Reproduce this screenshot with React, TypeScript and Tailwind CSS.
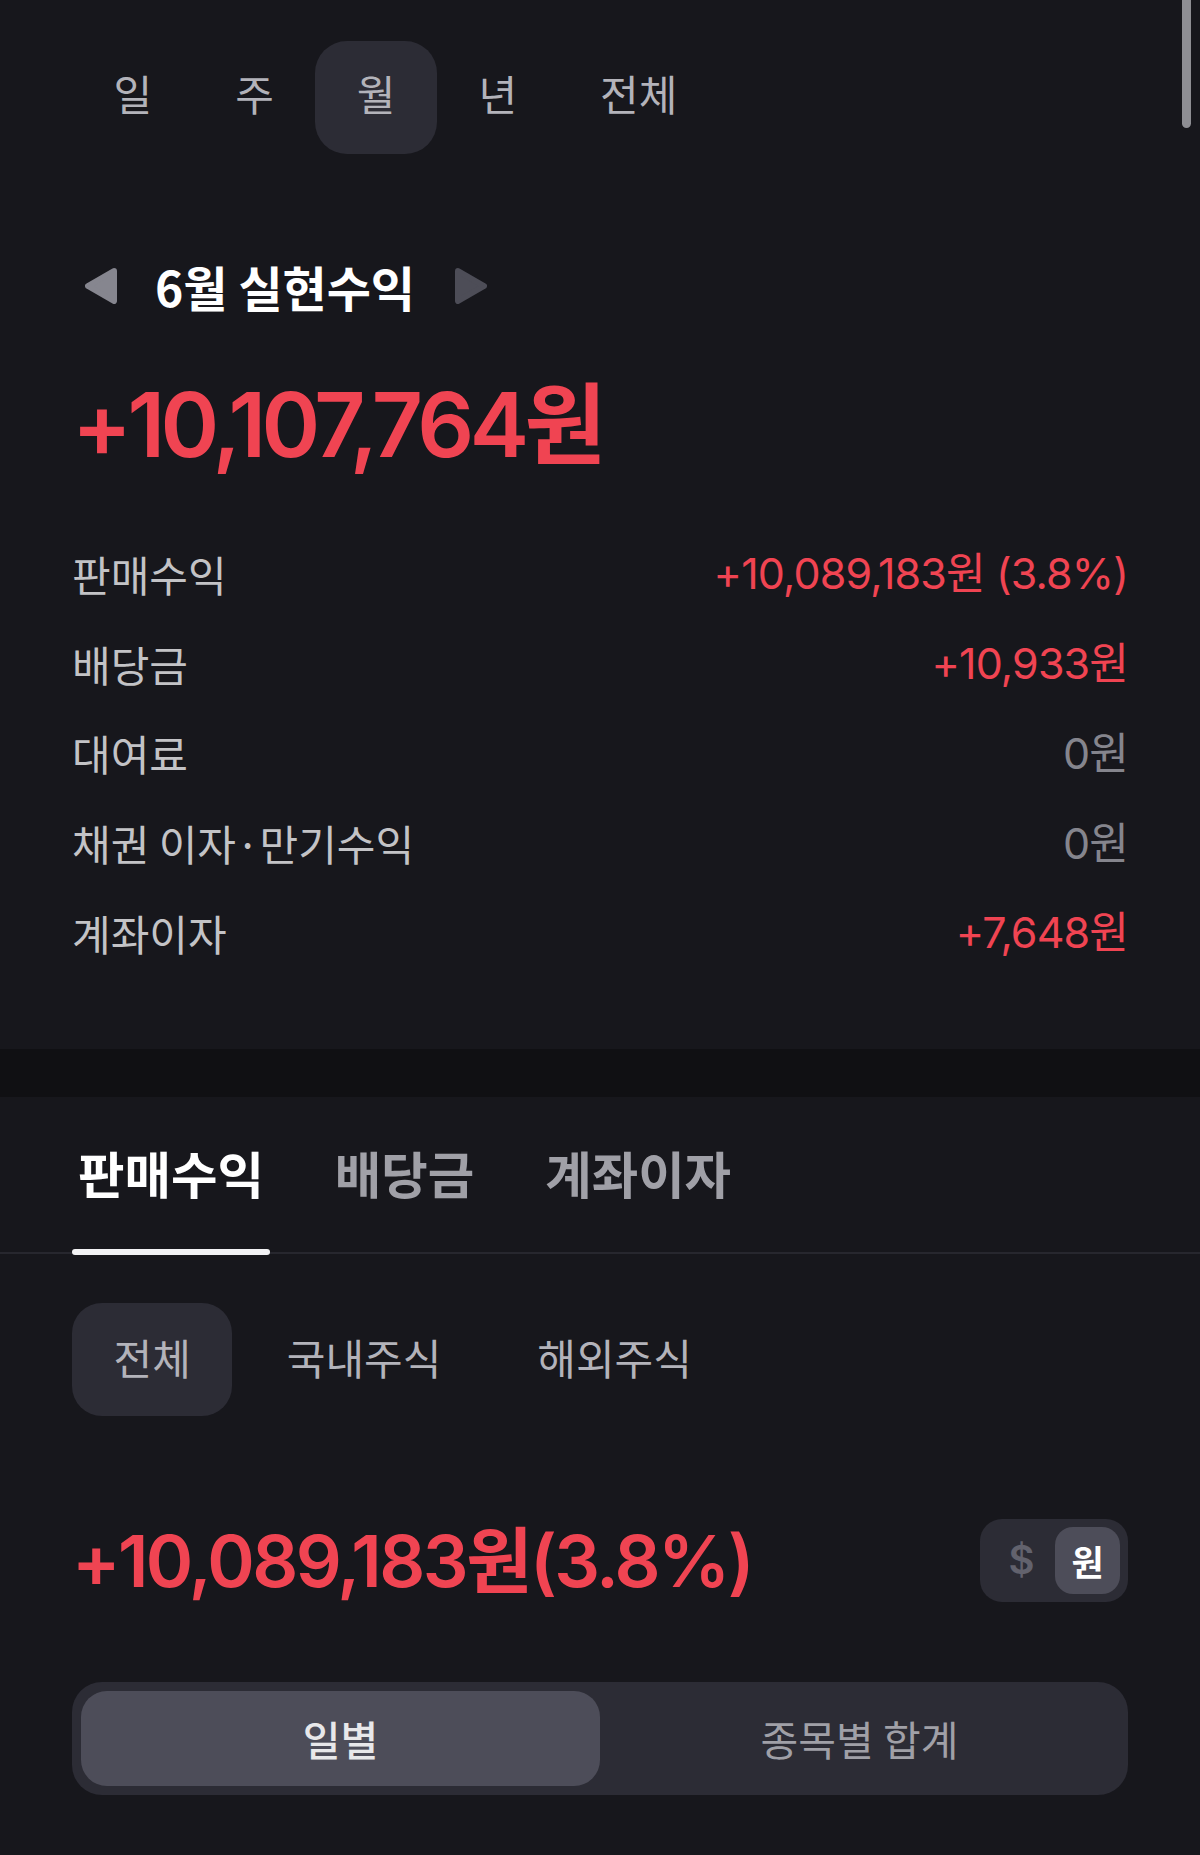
import React from "react";

const KR = { fontFamily: '"Noto Sans CJK KR", "Noto Sans", sans-serif' };
const NUM = { fontFamily: 'Inter, "Noto Sans CJK KR", sans-serif' };

function TriLeft({ color }: { color: string }) {
  return (
    <svg width="32" height="36" viewBox="0 0 32 36">
      <polygon points="29,3 3,18 29,33" fill={color} stroke={color} strokeWidth="6" strokeLinejoin="round" />
    </svg>
  );
}
function TriRight({ color }: { color: string }) {
  return (
    <svg width="32" height="36" viewBox="0 0 32 36">
      <polygon points="3,3 29,18 3,33" fill={color} stroke={color} strokeWidth="6" strokeLinejoin="round" />
    </svg>
  );
}

const rows: { label: string; value: string; red: boolean }[] = [
  { label: "판매수익", value: "+10,089,183원 (3.8%)", red: true },
  { label: "배당금", value: "+10,933원", red: true },
  { label: "대여료", value: "0원", red: false },
  { label: "채권 이자·만기수익", value: "0원", red: false },
  { label: "계좌이자", value: "+7,648원", red: true },
];

export default function App() {
  const periods = ["일", "주", "월", "년", "전체"];
  return (
    <div className="relative w-[1200px] min-h-[1855px] bg-[#17171c] overflow-hidden" style={KR}>
      {/* scrollbar */}
      <div className="absolute right-[9px] top-0 w-[9px] h-[128px] rounded-b-full bg-[#8e8e93]" />

      {/* Section 1 */}
      <div className="px-[72px] pt-[41px] pb-[71px]">
        <div className="flex">
          {periods.map((p) => (
            <div
              key={p}
              className={
                "h-[113px] px-[41.5px] pb-[10px] flex items-center rounded-[32px] text-[42px] leading-none text-[#b3b3ba] " +
                (p === "월" ? "bg-[#2c2c35]" : "")
              }
            >
              {p}
            </div>
          ))}
        </div>

        <div className="mt-[102px] h-[60px] flex items-center">
          <div className="ml-[13px]">
            <TriLeft color="#86868f" />
          </div>
          <div className="ml-[38px] text-[48px] font-bold leading-none text-white">6월 실현수익</div>
          <div className="ml-[40px]">
            <TriRight color="#4d4d57" />
          </div>
        </div>

        <div
          className="mt-[59px] h-[100px] leading-[100px] text-[89px] font-semibold text-[#f04452] tracking-[-0.05em]"
          style={NUM}
        >
          +10,107,764원
        </div>

        <div className="mt-[54px]">
          {rows.map((r) => (
            <div key={r.label} className="h-[89.75px] flex items-center justify-between">
              <span className="text-[42px] leading-none text-[#c3c3c6]">{r.label}</span>
              <span
                className={"text-[43px] leading-none tracking-[-0.02em] " + (r.red ? "text-[#f04452]" : "text-[#85858d]")}
                style={NUM}
              >
                {r.value}
              </span>
            </div>
          ))}
        </div>
      </div>

      {/* band */}
      <div className="h-[48px] bg-[#101013]" />

      {/* Section 2 */}
      <div className="flex gap-[59px] px-[72px] border-b-2 border-[#27272e]">
        {["판매수익", "배당금", "계좌이자"].map((t, i) => (
          <div
            key={t}
            className={
              "relative px-[6px] pt-[45px] pb-[50px] text-[50.5px] leading-[60px] font-bold " +
              (i === 0 ? "text-white" : "text-[#a0a0a7]")
            }
          >
            {t}
            {i === 0 && <div className="absolute left-0 right-0 bottom-[-3px] h-[6px] rounded-full bg-[#f2f2f4]" />}
          </div>
        ))}
      </div>

      <div className="px-[72px] pb-[59px]">
        <div className="mt-[49px] flex gap-[13px]">
          {["전체", "국내주식", "해외주식"].map((t, i) => (
            <div
              key={t}
              className={
                "h-[113px] px-[41.5px] pb-[5px] flex items-center rounded-[30px] text-[42px] leading-none text-[#b3b3ba] " +
                (i === 0 ? "bg-[#2c2c35]" : "")
              }
            >
              {t}
            </div>
          ))}
        </div>

        <div className="mt-[103px] h-[83px] flex items-center justify-between">
          <div
            className="text-[72px] leading-[83px] font-semibold text-[#f04452] tracking-[-0.035em]"
            style={NUM}
          >
            +10,089,183원(3.8%)
          </div>
          <div className="h-[83px] w-[148px] rounded-[22px] bg-[#2c2c35] p-[8px] flex items-center">
            <span className="w-[67px] text-center text-[40px] font-semibold leading-none text-[#62626d]" style={NUM}>
              $
            </span>
            <span className="w-[65px] h-[67px] rounded-[18px] bg-[#4d4d59] flex items-center justify-center text-[35px] font-bold leading-none text-white">
              원
            </span>
          </div>
        </div>

        <div className="mt-[80px] h-[113px] rounded-[30px] bg-[#2c2c35] p-[9px] flex">
          <div className="flex-1 rounded-[26px] bg-[#4d4d59] flex items-center justify-center text-[41px] font-medium leading-none text-[#e8e8ea]">
            일별
          </div>
          <div className="flex-1 flex items-center justify-center text-[41px] leading-none text-[#a0a0a7]">
            종목별 합계
          </div>
        </div>
      </div>
    </div>
  );
}
